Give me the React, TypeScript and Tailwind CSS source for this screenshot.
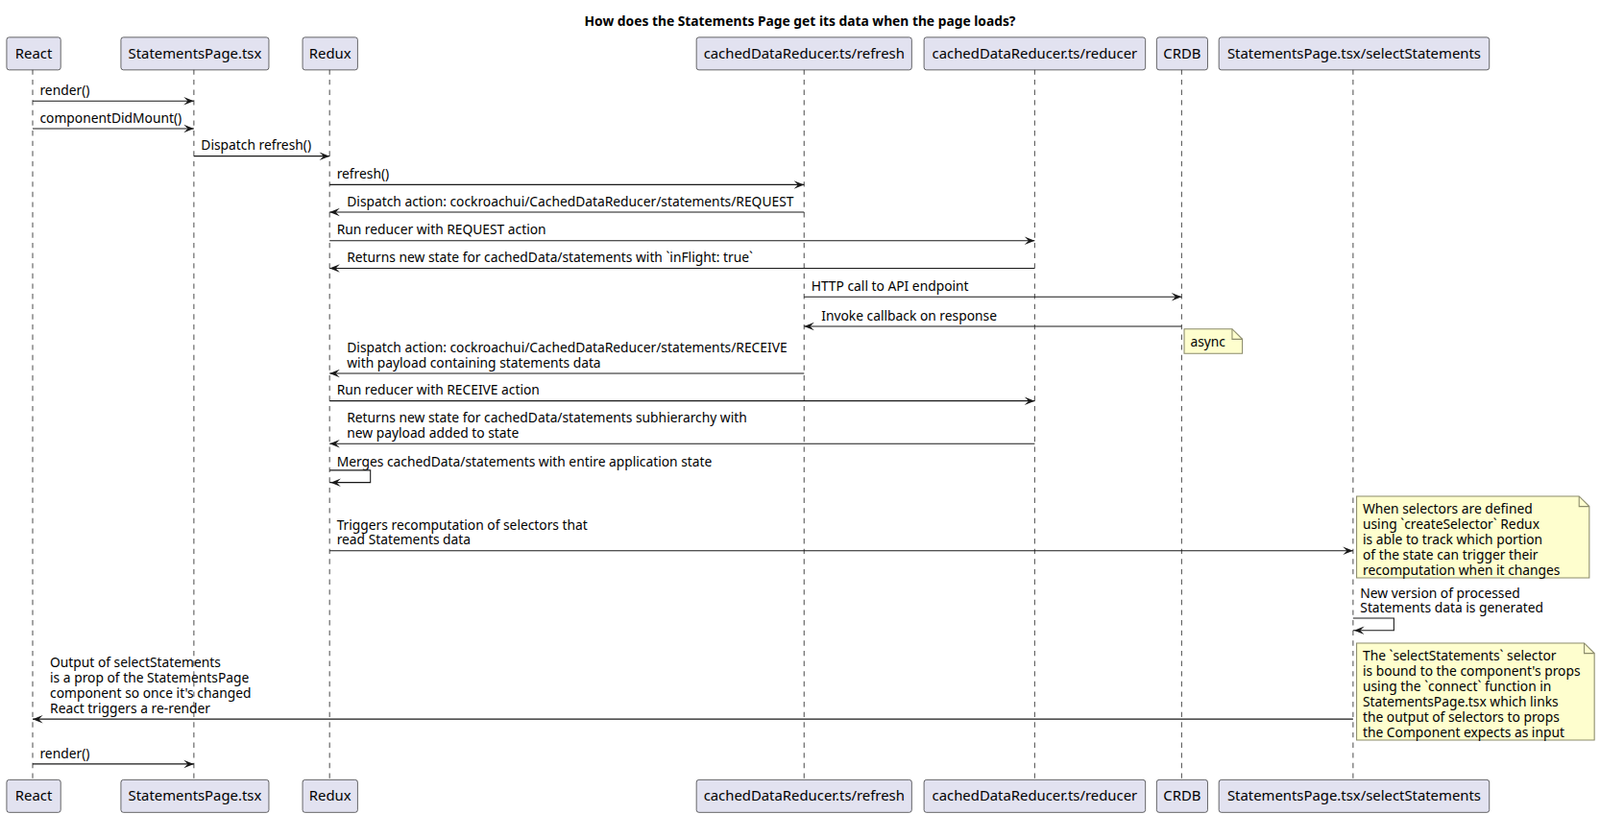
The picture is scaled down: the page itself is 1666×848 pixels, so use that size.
import React from "react";

const parts = [
  { n: "React", x0: 6, x1: 59, c: 32 },
  { n: "StatementsPage.tsx", x0: 118, x1: 263, c: 190 },
  { n: "Redux", x0: 296, x1: 350, c: 323 },
  { n: "cachedDataReducer.ts/refresh", x0: 682, x1: 893, c: 788 },
  { n: "cachedDataReducer.ts/reducer", x0: 905, x1: 1122, c: 1014 },
  { n: "CRDB", x0: 1133, x1: 1183, c: 1158 },
  { n: "StatementsPage.tsx/selectStatements", x0: 1194, x1: 1459, c: 1326 },
];
const C = parts.map((p) => p.c);

const msgs: { f: number; t: number; y: number; l: string[] }[] = [
  { f: 0, t: 1, y: 99, l: ["render()"] },
  { f: 0, t: 1, y: 126, l: ["componentDidMount()"] },
  { f: 1, t: 2, y: 153, l: ["Dispatch refresh()"] },
  { f: 2, t: 3, y: 181, l: ["refresh()"] },
  { f: 3, t: 2, y: 208, l: ["Dispatch action: cockroachui/CachedDataReducer/statements/REQUEST"] },
  { f: 2, t: 4, y: 236, l: ["Run reducer with REQUEST action"] },
  { f: 4, t: 2, y: 263, l: ["Returns new state for cachedData/statements with `inFlight: true`"] },
  { f: 3, t: 5, y: 291, l: ["HTTP call to API endpoint"] },
  { f: 5, t: 3, y: 320, l: ["Invoke callback on response"] },
  { f: 3, t: 2, y: 366, l: ["Dispatch action: cockroachui/CachedDataReducer/statements/RECEIVE", "with payload containing statements data"] },
  { f: 2, t: 4, y: 393, l: ["Run reducer with RECEIVE action"] },
  { f: 4, t: 2, y: 435, l: ["Returns new state for cachedData/statements subhierarchy with", "new payload added to state"] },
  { f: 2, t: 6, y: 540, l: ["Triggers recomputation of selectors that", "read Statements data"] },
  { f: 6, t: 0, y: 705, l: ["Output of selectStatements", "is a prop of the StatementsPage", "component so once it's changed", "React triggers a re-render"] },
  { f: 0, t: 1, y: 749, l: ["render()"] },
];

const head = (x: number, y: number, dir: number) =>
  `${x},${y} ${x - 10 * dir},${y - 4} ${x - 6 * dir},${y} ${x - 10 * dir},${y + 4}`;

function Note({ x, y, w, h, lines }: { x: number; y: number; w: number; h: number; lines: string[] }) {
  return (
    <g>
      <path d={`M${x},${y} L${x + w - 10},${y} L${x + w},${y + 10} L${x + w},${y + h} L${x},${y + h} Z`} fill="#fefece" stroke="#8b8b6b" strokeWidth={1} />
      <path d={`M${x + w - 10},${y} L${x + w - 10},${y + 10} L${x + w},${y + 10}`} fill="none" stroke="#8b8b6b" strokeWidth={1} />
      {lines.map((t, i) => (
        <text key={i} x={x + 6} y={y + 17 + i * 15}>{t}</text>
      ))}
    </g>
  );
}

export default function App() {
  return (
    <div className="w-[1666px] h-[848px] bg-white overflow-hidden font-['DejaVu_Sans',sans-serif] text-[13px]">
      <svg width="1666" height="848" viewBox="0 0 1568 798" fill="#000">
        <text x="784" y="25" textAnchor="middle" fontWeight="bold">How does the Statements Page get its data when the page loads?</text>
        {parts.map((p) => (
          <line key={p.n} x1={p.c} y1={68} x2={p.c} y2={764} stroke="#555" strokeDasharray="5,5" strokeWidth={1} />
        ))}
        {[36, 764].map((y) =>
          parts.map((p) => (
            <g key={p.n + y}>
              <rect x={p.x0 + 0.5} y={y + 0.5} width={p.x1 - p.x0} height={32} rx={2.5} fill="#e2e2f0" stroke="#181818" strokeWidth={0.6} />
              <text x={(p.x0 + p.x1) / 2 + 0.5} y={y + 21} textAnchor="middle" fontSize={14}>{p.n}</text>
            </g>
          ))
        )}
        {msgs.map((m, i) => {
          const a = C[m.f], b = C[m.t];
          const dir = b > a ? 1 : -1;
          const tx = Math.min(a, b) + (dir > 0 ? 7 : 17);
          const n = m.l.length;
          return (
            <g key={i}>
              <line x1={a} y1={m.y} x2={b} y2={m.y} stroke="#181818" strokeWidth={1} />
              <polygon points={head(b, m.y, dir)} fill="#181818" />
              {m.l.map((t, j) => (
                <text key={j} x={tx} y={m.y - 6 - (n - 1 - j) * 15}>{t}</text>
              ))}
            </g>
          );
        })}
        <text x={330} y={457}>Merges cachedData/statements with entire application state</text>
        <polyline points="323,461 363,461 363,473 323,473" fill="none" stroke="#181818" />
        <polygon points={head(324, 473, -1)} fill="#181818" />
        <text x={1333} y={586}>New version of processed</text>
        <text x={1333} y={600}>Statements data is generated</text>
        <polyline points="1326,606 1366,606 1366,618 1326,618" fill="none" stroke="#181818" />
        <polygon points={head(1327, 618, -1)} fill="#181818" />
        <Note x={1160.5} y={322.5} w={57} h={24} lines={["async"]} />
        <Note x={1329.5} y={486.5} w={228} h={80} lines={["When selectors are defined", "using `createSelector` Redux", "is able to track which portion", "of the state can trigger their", "recomputation when it changes"]} />
        <Note x={1329.5} y={630.5} w={233} h={95} lines={["The `selectStatements` selector", "is bound to the component's props", "using the `connect` function in", "StatementsPage.tsx which links", "the output of selectors to props", "the Component expects as input"]} />
      </svg>
    </div>
  );
}
